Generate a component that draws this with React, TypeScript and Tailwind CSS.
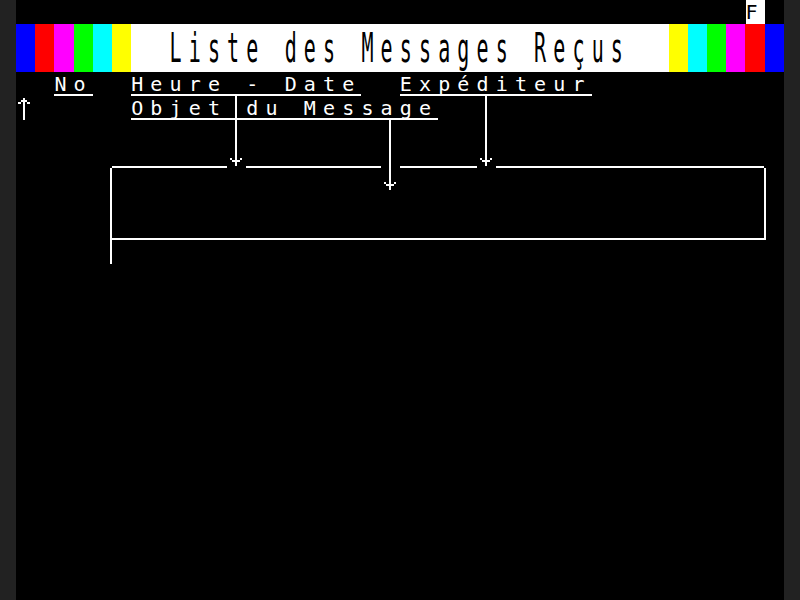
import * as React from "react";

// Minitel screen: 40 columns x 25 rows, each cell 19.2 x 24 px.
const CELL = "relative h-6 w-[19.2px] shrink-0";
const FONT = "font-['DejaVu_Sans_Mono',monospace] text-[20px] leading-6";

function ArrowDown() {
  return (
    <svg width="19.2" height="24" viewBox="0 0 19.2 24" className="absolute inset-0" fill="#fff">
      <rect x="8" y="0" width="2" height="22" />
      <rect x="3" y="14" width="2" height="2" />
      <rect x="13" y="14" width="2" height="2" />
      <rect x="5" y="16" width="3" height="2" />
      <rect x="10" y="16" width="3" height="2" />
    </svg>
  );
}

function ArrowUp() {
  return (
    <svg width="19.2" height="24" viewBox="0 0 19.2 24" className="absolute inset-0" fill="#fff">
      <rect x="7" y="2" width="2" height="22" />
      <rect x="5" y="4" width="6" height="2" />
      <rect x="2" y="6" width="3" height="2" />
      <rect x="11" y="6" width="3" height="2" />
    </svg>
  );
}

// deco codes: _ bottom line, | centre line, + both, v arrow down, A arrow up,
// ) line on right edge, ( line on left edge
function Cell({ ch, deco }: { ch: string; deco: string }) {
  const bottom = deco === "_" || deco === "+";
  const centre = deco === "|" || deco === "+";
  return (
    <span className={`${CELL} ${bottom ? "border-b-2 border-white" : ""}`}>
      {ch !== " " && ch}
      {centre && <span className="absolute left-2 top-0 h-6 w-[2px] bg-white" />}
      {deco === "v" && <ArrowDown />}
      {deco === "A" && <ArrowUp />}
      {deco === ")" && <span className="absolute right-0 top-0 h-6 w-[2px] bg-white" />}
      {deco === "(" && <span className="absolute left-0 top-0 h-6 w-[2px] bg-white" />}
    </span>
  );
}

function Row({ text = "", deco = "" }: { text?: string; deco?: string }) {
  const chars = Array.from(text.padEnd(40));
  const marks = Array.from(deco.padEnd(40));
  return (
    <div className={`flex h-6 text-white ${FONT}`}>
      {chars.slice(0, 40).map((c, i) => (
        <Cell key={i} ch={c} deco={marks[i]} />
      ))}
    </div>
  );
}

const LEFT_BARS = ["bg-[#0000ff]", "bg-[#ff0000]", "bg-[#ff00ff]", "bg-[#00ff00]", "bg-[#00ffff]", "bg-[#ffff00]"];
const RIGHT_BARS = ["bg-[#ffff00]", "bg-[#00ffff]", "bg-[#00ff00]", "bg-[#ff00ff]", "bg-[#ff0000]", "bg-[#0000ff]"];

function TitleBar() {
  const title = Array.from("  Liste des Messages Reçus".padEnd(28));
  return (
    <div className="flex h-12">
      {LEFT_BARS.map((c) => (
        <div key={c} className={`h-12 w-[19.2px] shrink-0 ${c}`} />
      ))}
      <div className="h-12 w-[537.6px] shrink-0 bg-white">
        <div className={`mt-6 flex h-6 origin-bottom scale-y-200 text-black ${FONT}`}>
          {title.map((c, i) => (
            <span key={i} className={CELL}>
              {c !== " " && c}
            </span>
          ))}
        </div>
      </div>
      {RIGHT_BARS.map((c) => (
        <div key={c} className={`h-12 w-[19.2px] shrink-0 ${c}`} />
      ))}
    </div>
  );
}

function StatusRow() {
  return (
    <div className={`flex h-6 ${FONT}`}>
      <div className="h-6 w-[729.6px] shrink-0" />
      <span className={`${CELL} bg-white text-black`}>F</span>
      <span className={CELL} />
    </div>
  );
}

export default function App() {
  return (
    <div className="flex h-[600px] w-[800px] bg-[#222222]">
      <div className="ml-4 flex h-[600px] w-[768px] flex-col overflow-hidden bg-black">
        <StatusRow />
        <TitleBar />
        <Row text="  No  Heure - Date  Expéditeur" deco="  __  ____________  __________" />
        <Row text="      Objet du Message" deco="A     _____+__________  |" />
        <Row deco="           |       |    |" />
        <Row deco="     ______v_______|____v______________ " />
        <Row deco="    )              v                   (" />
        <Row deco="    )                                  (" />
        <Row deco="    )__________________________________(" />
        <Row deco="    )" />
      </div>
    </div>
  );
}
